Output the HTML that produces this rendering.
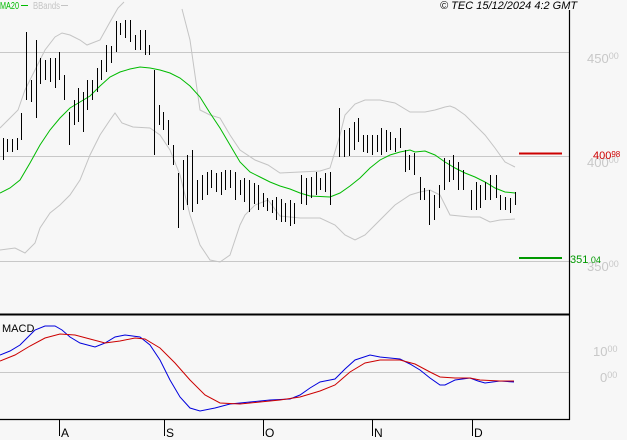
<!DOCTYPE html>
<html><head><meta charset="utf-8"><style>
html,body{margin:0;padding:0;background:#f7f7f7;}
svg{display:block;font-family:"Liberation Sans",sans-serif;}
</style></head><body>
<svg width="627" height="440" viewBox="0 0 627 440" xmlns="http://www.w3.org/2000/svg">
<rect width="627" height="440" fill="#f7f7f7"/>
<g stroke="#c8c8c8" stroke-width="1">
<line x1="0" y1="52.5" x2="569" y2="52.5"/>
<line x1="0" y1="156.5" x2="569" y2="156.5"/>
<line x1="0" y1="261.5" x2="569" y2="261.5"/>
<line x1="0" y1="372.5" x2="569" y2="372.5"/>
</g>
<g fill="none" stroke="#c4c4c4" stroke-width="1">
<polyline points="0,128 10,118 18,110 25,90 35,70 45,50 55,37 62,33 70,35 80,40 87,45 100,40 110,22 118,8 124,2"/>
<polyline points="182,9 190,40 200,110 210,115 220,118 230,135 240,150 255,160 268,165 280,173 300,172 320,171 330,168 340,135 345,115 355,104 365,100 380,100 395,103 410,112 425,112 435,110 445,107 450,106 455,108 465,115 475,125 485,135 495,148 505,162 515,167"/>
<polyline points="0,250 15,248 25,253 35,243 40,228 50,213 60,205 70,195 80,180 90,155 100,135 110,120 115,113 122,123 133,127 150,128 160,135 170,150 180,175 190,215 200,245 210,260 220,262 230,255 240,225 245,215 255,205 268,200 280,216 300,218 320,218 335,225 345,235 355,240 365,235 375,225 385,215 395,205 410,195 420,192 430,190 440,195 450,215 470,217 480,217 490,222 500,220 515,219"/>
</g>
<polyline fill="none" stroke="#00bb00" stroke-width="1" points="0,193 10,188 20,180 30,163 40,145 50,130 60,118 70,108 80,102 90,96 100,86 110,77 120,72 130,69 140,67 150,68 160,70 170,73 180,78 190,86 200,97 210,113 220,128 230,145 240,162 250,172 260,177 270,182 280,186 290,189 300,193 310,196 330,197 340,193 350,186 360,178 370,168 380,160 390,155 400,152 410,150 415,152 425,151 435,155 445,162 455,168 465,173 475,177 485,182 495,188 505,192 515,193"/>
<path fill="none" stroke="#000" stroke-width="1" shape-rendering="crispEdges" transform="translate(0.5,0)" d="
M3,138V160M7,139V152M12,139V152M17,138V150M21,113V140M26,32V100M31,80V102M36,40V118M40,58V84M45,60V80M50,58V82M55,58V88M59,52V80M64,75V100M69,112V145M74,100V125M78,88V122M83,92V132M87,80V110M92,80V100M97,68V92M101,60V80M106,45V72M111,46V63M116,21V52M120,23V35M125,20V38M130,20V42M135,35V50M140,30V50M145,30V55M149,45V55M154,70V155M159,105V125M163,112V130M168,120V145M173,145V165M178,173V228M183,160V210M187,155V205M192,150V212M197,180V204M202,175V200M207,172V195M211,170V188M216,173V192M221,172V195M225,170V190M230,170V188M235,172V200M240,180V195M244,178V202M249,180V212M254,183V204M258,185V210M263,193V207M267,198V211M272,200V213M276,197V220M281,199V222M285,203V222M290,200V226M294,203V224M301,175V204M306,178V205M311,177V198M316,172V195M320,178V190M325,173V192M330,172V205M339,108V157M344,130V157M349,128V156M354,122V150M358,118V142M363,135V152M367,135V153M372,135V155M377,135V152M381,128V155M386,130V152M390,132V150M395,138V152M400,128V148M405,150V172M409,155V170M414,153V175M420,177V200M424,188V200M429,190V225M434,195V220M439,185V208M444,158V190M449,160V182M453,155V180M458,162V190M463,170V190M471,190V210M476,182V210M480,185V208M485,182V200M490,175V200M496,175V198M500,195V210M505,197V210M510,198V213M515,192V205"/>
<line x1="519" y1="153.5" x2="562" y2="153.5" stroke="#cc0000" stroke-width="2"/>
<line x1="519" y1="258" x2="562" y2="258" stroke="#009900" stroke-width="2"/>
<line x1="569.5" y1="10" x2="569.5" y2="420" stroke="#000" stroke-width="1.2"/>
<line x1="0" y1="314.5" x2="570" y2="314.5" stroke="#000" stroke-width="2"/>
<line x1="0" y1="419.5" x2="570" y2="419.5" stroke="#000" stroke-width="1.2"/>
<g stroke="#000" stroke-width="1">
<line x1="59.5" y1="419" x2="59.5" y2="436"/><line x1="164.5" y1="419" x2="164.5" y2="436"/><line x1="263.5" y1="419" x2="263.5" y2="436"/><line x1="372.5" y1="419" x2="372.5" y2="436"/><line x1="472.5" y1="419" x2="472.5" y2="436"/>
</g>
<g font-size="12" fill="#000">
<text x="61" y="437">A</text><text x="166" y="437">S</text><text x="265" y="437">O</text><text x="374" y="437">N</text><text x="474" y="437">D</text>
</g>
<polyline fill="none" stroke="#0000dd" stroke-width="1" points="0,355 10,351 20,345 27,338 35,330 45,326 55,326 62,330 70,337 80,343 95,347 105,343 115,337 125,335 140,337 150,345 160,360 170,380 180,397 190,408 200,411 215,408 230,404 250,402 270,400 290,399 300,395 310,388 320,382 335,379 345,369 355,360 370,355 380,357 400,359 410,364 420,370 430,378 440,385 445,385 455,380 470,378 478,381 485,383 500,381 514,382"/>
<polyline fill="none" stroke="#cc0000" stroke-width="1" points="0,361 15,355 30,346 45,338 60,334 75,335 90,339 105,343 120,341 135,338 145,339 160,348 175,363 190,380 205,395 220,403 240,404 260,402 280,400 300,397 320,391 335,385 350,372 365,363 380,360 400,360 415,364 430,372 440,377 455,378 470,378 480,380 500,381 514,381"/>
<text x="2" y="332" font-size="11" fill="#000">MACD</text>
<text x="0" y="9" font-size="10" fill="#00bb00" textLength="19" lengthAdjust="spacingAndGlyphs">MA20</text>
<line x1="21" y1="5.5" x2="28" y2="5.5" stroke="#00bb00"/>
<text x="33" y="9" font-size="10" fill="#c4c4c4" textLength="27" lengthAdjust="spacingAndGlyphs">BBands</text>
<line x1="61" y1="5.5" x2="68" y2="5.5" stroke="#c4c4c4"/>
<text x="440" y="9" font-size="11" font-style="italic" fill="#000">© TEC 15/12/2024 4:2 GMT</text>
<g fill="#c8c8c8" font-size="13">
<text x="587" y="63">450<tspan font-size="9" dy="-4">00</tspan></text>
<text x="587" y="167">400<tspan font-size="9" dy="-4">00</tspan></text>
<text x="587" y="271">350<tspan font-size="9" dy="-4">00</tspan></text>
<text x="593" y="356">10<tspan font-size="9" dy="-4">00</tspan></text>
<text x="600" y="382">0<tspan font-size="9" dy="-4">00</tspan></text>
</g>
<text x="593" y="159" font-size="11" fill="#cc0000">400<tspan font-size="8" dy="-2">98</tspan></text>
<text x="570" y="263" font-size="11" fill="#009900">351<tspan font-size="9"> 04</tspan></text>
</svg>
</body></html>
